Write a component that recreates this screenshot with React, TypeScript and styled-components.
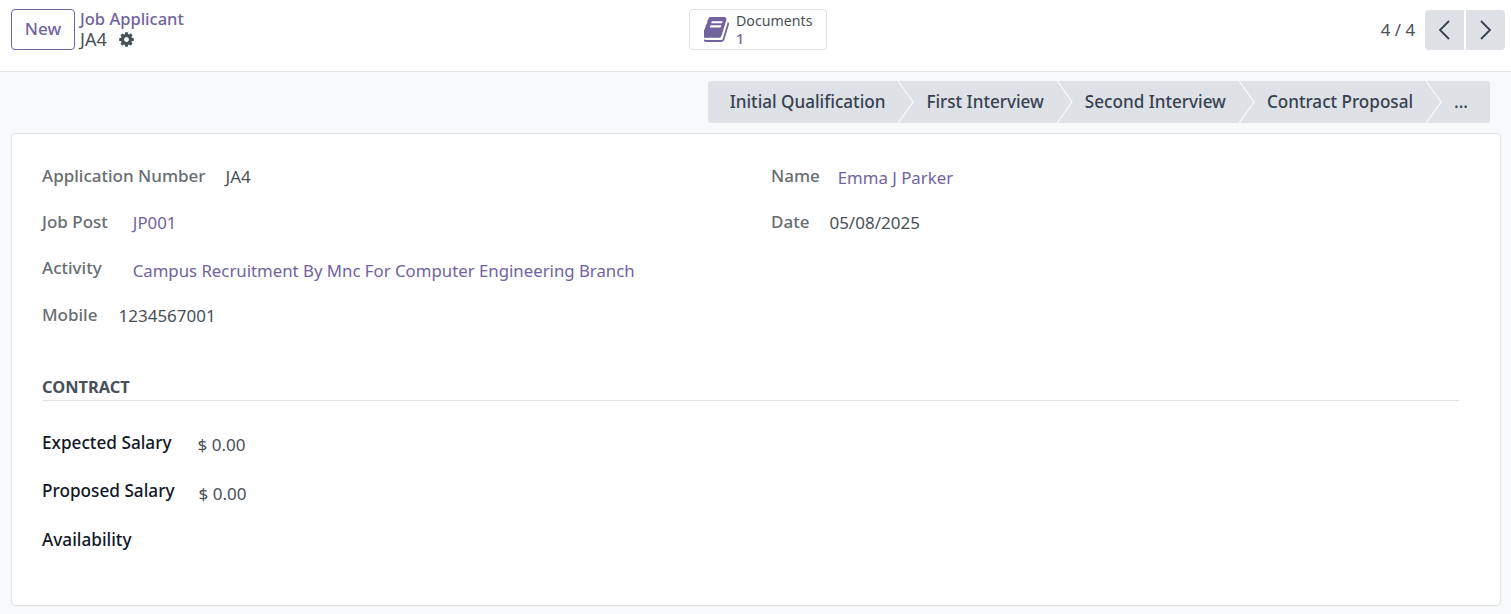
import React from "react";
import styled, { createGlobalStyle } from "styled-components";

const Global = createGlobalStyle`
  html, body { margin: 0; padding: 0; background: #fff; }
  body { font-family: "Noto Sans", "Open Sans", sans-serif; color: #495057; font-size: 16px; }
`;

const Page = styled.div`
  width: 1511px; height: 614px; display: flex; flex-direction: column; overflow: hidden; background: #f8f9fa;
`;
const Header = styled.header`
  height: 72px; flex: none; background: #fff; border-bottom: 1px solid #dee2e6; box-sizing: border-box;
  display: grid; grid-template-columns: 1fr auto 1fr; align-items: center;
  padding: 0 6px 12px 11px;
`;
const HeaderLeft = styled.div`display: flex; align-items: center; gap: 5px;`;
const NewButton = styled.button`
  width: 64px; height: 41px; border: 1px solid #71639e; border-radius: 4px; background: #fff; color: #71639e;
  font: 500 17px "Noto Sans", sans-serif; padding: 0 0 2px;
`;
const Crumbs = styled.div`display: flex; flex-direction: column; line-height: 21px; margin-bottom: 2px;`;
const CrumbLink = styled.a`color: #71639e; font-size: 16.5px; font-weight: 500;`;
const CrumbRow = styled.div`display: flex; align-items: center; gap: 11px; font-size: 18px; color: #495057;`;
const GearIcon = styled.svg`width: 17px; height: 17px; fill: #495057;`;
const DocButton = styled.button`
  width: 138px; height: 41px; display: flex; align-items: center; gap: 7px; padding: 0 0 0 14px; border: 1px solid #dee2e6;
  border-radius: 4px; background: #fff; font-family: "Noto Sans", sans-serif; text-align: left;
`;
const BookIcon = styled.svg`width: 25px; height: 25px; fill: #71639e;`;
const DocText = styled.span`display: flex; flex-direction: column; font-size: 14.2px; line-height: 18px; color: #495057;`;
const DocCount = styled.b`color: #71639e; font-weight: 500;`;
const Pager = styled.div`display: flex; justify-content: flex-end; align-items: center;`;
const PagerValue = styled.span`font-size: 16.8px; margin-right: 10px;`;
const PagerButton = styled.button<{ $side: "l" | "r" }>`
  width: 39px; height: 40px; border: 0; padding: 0; background: #dee2e6; display: flex;
  align-items: center; justify-content: center; margin-left: ${p => (p.$side === "r" ? 2 : 0)}px;
  border-radius: ${p => (p.$side === "l" ? "4px 0 0 4px" : "0 4px 4px 0")};
`;
const StatusBar = styled.div`
  display: flex; justify-content: flex-end; padding: 9px 21px 10px 0; flex: none;
`;
const Stage = styled.div<{ $first?: boolean; $last?: boolean }>`
  position: relative; height: 42px; box-sizing: border-box; display: flex; align-items: center; background: #dee2e6; color: #374151;
  font-size: 17.1px; font-weight: 500;
  padding: 0 ${p => (p.$last ? 22 : 13)}px 2px ${p => (p.$first ? 22 : 28)}px;
  border-radius: ${p => (p.$first ? "3px 0 0 3px" : p.$last ? "0 3px 3px 0" : "0")};
`;
const Chevron = styled.svg`
  position: absolute; right: -16px; top: 0; width: 17px; height: 42px; z-index: 1;
`;
const Card = styled.main`
  margin: 0 10px 8px 11px; flex: 1; background: #fff; border: 1px solid #dee2e6; border-radius: 4px;
  padding: 19px 41px 0 30px;
`;
const Columns = styled.section`display: grid; grid-template-columns: 729px 1fr;`;
const Column = styled.div`display: flex; flex-direction: column;`;
const Field = styled.div<{ $tall?: boolean }>`
  height: ${p => (p.$tall ? 48.5 : 46.3)}px; display: flex; align-items: center;
`;
const Label = styled.span<{ $strong?: boolean; $gap: number }>`
  font-size: ${p => (p.$strong ? 17.2 : 17)}px; font-weight: 500; color: ${p => (p.$strong ? "#111827" : "#686d72")};
  margin-right: ${p => p.$gap}px; margin-bottom: 2px;
`;
const Value = styled.span<{ $drop?: number }>`
  font-size: 17px; color: #495057; margin-top: ${p => p.$drop ?? 0}px;
`;
const LinkValue = styled(Value)`font-size: 16.8px; color: #71639e;`;
const SectionTitle = styled.h2`
  margin: 38px 0 18px; padding-bottom: 2px; border-bottom: 1px solid #dee2e6; font-size: 16.4px; line-height: 22px; font-weight: 700; color: #495057;
`;

const chevron = (
  <Chevron viewBox="0 0 17 42" aria-hidden>
    <polyline points="0.5,-1 16,21 0.5,43" fill="none" stroke="#f8f9fa" strokeWidth="1.2" />
  </Chevron>
);

const Arrow = ({ d }: { d: string }) => (
  <svg width="15" height="20" viewBox="0 0 15 20" fill="none" stroke="#374151" strokeWidth="1.8"><polyline points={d} /></svg>
);

const Gear = () => (
  <GearIcon viewBox="0 0 1792 1792" aria-hidden>
    <path d="M1152 896q0-106-75-181t-181-75-181 75-75 181 75 181 181 75 181-75 75-181zm512-109v222q0 12-8 23t-20 13l-185 28q-19 54-39 91 35 50 107 138 10 12 10 25t-9 23q-27 37-99 108t-94 71q-12 0-26-9l-138-108q-44 23-91 38-16 136-29 186-7 28-36 28h-222q-14 0-24.500-8.500t-11.500-21.500l-28-184q-49-16-90-37l-141 107q-10 9-25 9-14 0-25-11-126-114-165-168-7-10-7-23 0-12 8-23 15-21 51-66.500t54-70.500q-27-50-41-99l-183-27q-13-2-21-12.500t-8-23.500v-222q0-12 8-23t19-13l186-28q14-46 39-92-40-57-107-138-10-12-10-24 0-10 9-23 26-36 98.500-107.500t94.500-71.500q13 0 26 10l138 107q44-23 91-38 16-136 29-186 7-28 36-28h222q14 0 24.500 8.500t11.500 21.500l28 184q49 16 90 37l142-107q9-9 24-9 13 0 25 10 129 119 165 170 7 8 7 22 0 12-8 23-15 21-51 66.500t-54 70.500q26 50 41 98l183 28q13 2 21 12.500t8 23.500z" />
  </GearIcon>
);

const Book = () => (
  <BookIcon viewBox="128 128 1536 1536" aria-hidden>
    <path d="M1639 478q40 57 18 129l-275 906q-19 64-76.500 107.500t-122.500 43.500h-923q-77 0-148.500-53.500t-99.500-131.500q-24-67-2-127 0-4 3-27t4-37q1-8-3-21.500t-3-19.500q2-11 8-21t16.500-23.500 16.500-23.500q23-38 45-91.500t30-91.500q3-10 .5-30t-.5-28q3-11 17-28t17-23q21-36 42-92t25-90q1-9-2.500-32t.5-28q4-13 22-30.500t22-22.500q19-26 42.500-84.500t27.500-96.500q1-8-3-25.500t-2-26.500q2-8 9-18t18-23 17-21q8-12 16.500-30.500t15-35 16-36 19.500-32 26.500-23.500 36-11.500 47.500 5.500l-1 3q38-9 51-9h761q74 0 114 56t18 130l-274 906q-36 119-71.500 153.500t-128.500 34.500h-869q-27 0-38 15-11 16-1 43 24 70 144 70h923q29 0 56-15.500t35-41.500l300-987q7-22 5-57 38 15 59 43zm-1064 2q-4 13 2 22.500t20 9.500h608q13 0 25.500-9.500t16.500-22.500l21-64q4-13-2-22.500t-20-9.500h-608q-13 0-25.500 9.500t-16.500 22.500zm-83 256q-4 13 2 22.500t20 9.500h608q13 0 25.500-9.500t16.500-22.500l21-64q4-13-2-22.500t-20-9.500h-608q-13 0-25.500 9.500t-16.500 22.500z" />
  </BookIcon>
);

export default function App() {
  return (
    <Page>
      <Global />
      <Header>
        <HeaderLeft>
          <NewButton>New</NewButton>
          <Crumbs>
            <CrumbLink>Job Applicant</CrumbLink>
            <CrumbRow>JA4 <Gear /></CrumbRow>
          </Crumbs>
        </HeaderLeft>
        <DocButton>
          <Book />
          <DocText>Documents<DocCount>1</DocCount></DocText>
        </DocButton>
        <Pager>
          <PagerValue>4 / 4</PagerValue>
          <PagerButton $side="l"><Arrow d="12,1 3,10 12,19" /></PagerButton>
          <PagerButton $side="r"><Arrow d="3,1 12,10 3,19" /></PagerButton>
        </Pager>
      </Header>
      <StatusBar>
        <Stage $first>Initial Qualification{chevron}</Stage>
        <Stage>First Interview{chevron}</Stage>
        <Stage>Second Interview{chevron}</Stage>
        <Stage>Contract Proposal{chevron}</Stage>
        <Stage $last>...</Stage>
      </StatusBar>
      <Card>
        <Columns>
          <Column>
            <Field><Label $gap={20}>Application Number</Label><Value>JA4</Value></Field>
            <Field><Label $gap={25}>Job Post</Label><LinkValue>JP001</LinkValue></Field>
            <Field><Label $gap={31}>Activity</Label><LinkValue $drop={4}>Campus Recruitment By Mnc For Computer Engineering Branch</LinkValue></Field>
            <Field><Label $gap={21}>Mobile</Label><Value>1234567001</Value></Field>
          </Column>
          <Column>
            <Field><Label $gap={18}>Name</Label><LinkValue $drop={2}>Emma J Parker</LinkValue></Field>
            <Field><Label $gap={20}>Date</Label><Value>05/08/2025</Value></Field>
          </Column>
        </Columns>
        <SectionTitle>CONTRACT</SectionTitle>
        <Column>
          <Field $tall><Label $strong $gap={26}>Expected Salary</Label><Value $drop={3}>$ 0.00</Value></Field>
          <Field $tall><Label $strong $gap={24}>Proposed Salary</Label><Value $drop={3}>$ 0.00</Value></Field>
          <Field $tall><Label $strong $gap={0}>Availability</Label></Field>
        </Column>
      </Card>
    </Page>
  );
}
